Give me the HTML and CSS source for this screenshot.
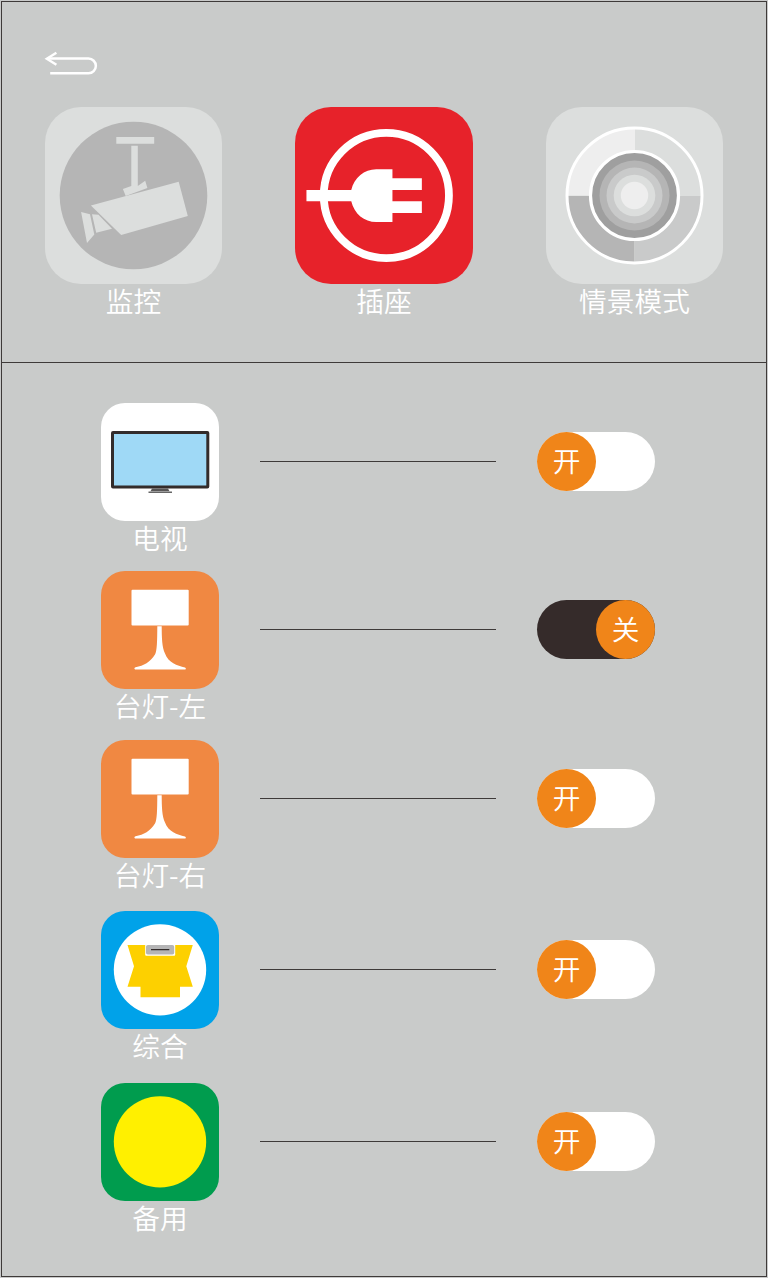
FILE: index.html
```html
<!DOCTYPE html>
<html lang="zh-CN">
<head>
<meta charset="utf-8">
<title>插座</title>
<link rel="stylesheet" href="styles.css">
</head>
<body>
<svg class="defs" width="0" height="0">
  <symbol id="lamp" viewBox="0 0 118 118">
    <rect x="30.5" y="18.8" width="57.2" height="35.6" rx="1"/>
    <path d="M56.3 55.2H60.7C60.8 67 61 76 64 82.500C67.500 92 76 94.500 84 96.400Q85.500 96.900 84.500 98.400H34Q32.500 97 34.500 96.300C43 94.800 49 91 54 83.500C56 80 56.200 70 56.300 55.200Z"/>
  </symbol>
</svg>
<main class="screen">
  <header class="top">
    <a class="back" href="#" aria-label="返回">
      <svg width="54" height="26" viewBox="0 0 54 26" fill="none" stroke="#fff">
        <path d="M4 8.600H44.500A7.300 7.300 0 0 1 44.500 23.300H6.200" stroke-width="2.500"/>
        <path d="M12.400 2.800L2.800 8.700L12.400 14.800" stroke-width="2.400"/>
      </svg>
    </a>
    <nav class="tabs">
      <div class="tab">
        <svg class="tile" viewBox="0 0 177 177">
          <circle cx="88.500" cy="88.500" r="73.800" fill="#b5b5b5"/>
          <g fill="#dcdedd">
            <path d="M71.300 30H109.200V36.700H71.300ZM86.300 38.700H92.800V79L100.200 73.800L102.400 81L80.700 89L77.900 81.900L86.300 79Z"/>
            <path d="M45.900 98.500L133.700 74.800L142.800 108.900L76.200 128Z"/>
            <path d="M36.100 105L45 107.200L49.300 127.500L42 136ZM47 107.200L53.500 107.800L67 121.700L51.200 125.800Z"/>
          </g>
        </svg>
        <span class="label">监控</span>
      </div>
      <div class="tab">
        <svg class="tile tile-active" viewBox="0 0 177.500 177" fill="#fff">
          <circle cx="91.100" cy="88.500" r="62.600" fill="none" stroke="#fff" stroke-width="7.800"/>
          <path d="M11.200 83H56C59 70.500 69 62.200 81 62.200H97.200V71.300H126.600V83H97.200V94.300H126.600V106H97.200V115.100H81C69 115.100 59 107 56 94.300H11.200Z"/>
        </svg>
        <span class="label">插座</span>
      </div>
      <div class="tab">
        <svg class="tile" viewBox="0 0 177 177">
          <path d="M89 88.500V20.500A68 68 0 0 0 21 88.500Z" fill="#eee"/>
          <path d="M88.200 89V157A68 68 0 0 1 20.500 89Z" fill="#b5b5b5"/>
          <path d="M88.200 89H156.500A68 68 0 0 1 88.200 157Z" fill="#c9caca"/>
          <circle cx="88.500" cy="88.500" r="67.500" fill="none" stroke="#fff" stroke-width="3"/>
          <circle cx="88.500" cy="88.500" r="44" fill="#9f9f9f" stroke="#fff" stroke-width="3.200"/>
          <circle cx="88.500" cy="88.500" r="35" fill="#b5b5b5"/>
          <circle cx="88.500" cy="88.500" r="28" fill="#c9caca"/>
          <circle cx="88.500" cy="88.500" r="20.800" fill="#dcdedd"/>
          <circle cx="88.500" cy="88.500" r="13.700" fill="#eee"/>
        </svg>
        <span class="label">情景模式</span>
      </div>
    </nav>
  </header>
  <section class="devices">
    <div class="device">
      <div class="item">
        <svg class="icon white" viewBox="0 0 118 118">
          <rect x="11.500" y="29.500" width="95.300" height="54.400" rx=".5" fill="#9fd9f6" stroke="#332c2b" stroke-width="3"/>
          <path d="M51 85.400H67L68.500 88.200H49.500Z" fill="#595757"/>
          <path d="M47.500 89.300H71" stroke="#666" stroke-width="1.500"/>
        </svg>
        <span class="label">电视</span>
      </div>
      <div class="wire"></div>
      <div class="toggle"><span class="knob">开</span></div>
    </div>
    <div class="device lamp-left">
      <div class="item">
        <svg class="icon orange" fill="#fff"><use href="#lamp"/></svg>
        <span class="label">台灯-左</span>
      </div>
      <div class="wire"></div>
      <div class="toggle off"><span class="knob">关</span></div>
    </div>
    <div class="device lamp-right">
      <div class="item">
        <svg class="icon orange" fill="#fff"><use href="#lamp"/></svg>
        <span class="label">台灯-右</span>
      </div>
      <div class="wire"></div>
      <div class="toggle"><span class="knob">开</span></div>
    </div>
    <div class="device mixed">
      <div class="item">
        <svg class="icon blue" viewBox="0 0 118 118">
          <ellipse cx="59" cy="58.800" rx="46.200" ry="45.600" fill="#fff"/>
          <path d="M26.500 34H91.800L85.300 55.200L91.800 75.800H79V86.300H39.500V75.800H26.500L33 55.200Z" fill="#fdd000"/>
          <rect x="44.200" y="32.500" width="30" height="12.300" rx="1" fill="#fff"/>
          <rect x="45" y="34" width="28.200" height="9.500" rx="1.800" fill="#b5b5b6"/>
          <path d="M50 38.600H68.300" stroke="#332c2b" stroke-width="1.200"/>
        </svg>
        <span class="label">综合</span>
      </div>
      <div class="wire"></div>
      <div class="toggle"><span class="knob">开</span></div>
    </div>
    <div class="device spare">
      <div class="item">
        <svg class="icon green" viewBox="0 0 118 118"><ellipse cx="59" cy="58.800" rx="46.200" ry="45.600" fill="#fff000"/></svg>
        <span class="label">备用</span>
      </div>
      <div class="wire"></div>
      <div class="toggle"><span class="knob">开</span></div>
    </div>
  </section>
</main>
</body>
</html>
```
FILE: styles.css
```css
* { box-sizing: border-box; }
body {
  margin: 0;
  padding: 1px;
  background: #c9caca;
  font-family: "Noto Sans CJK SC", sans-serif;
  font-weight: 350;
  color: #fff;
}
.defs { display: block; }
.screen {
  width: 766px;
  height: 1276px;
  border: 1px solid #3e3a39;
  background: #c9cbca;
}
.top {
  height: 361px;
  padding: 48px 43px 0 43px;
  border-bottom: 1px solid #3e3a39;
}
.back { display: block; width: 54px; height: 26px; margin-left: -1px; }
.back svg { display: block; }
.tabs {
  display: flex;
  justify-content: space-between;
  margin-top: 31px;
}
.tab {
  display: flex;
  flex-direction: column;
  align-items: center;
  width: 177px;
}
.tile {
  display: block;
  width: 177px;
  height: 177px;
  border-radius: 36px;
  background: #dcdedd;
}
.tile-active {
  width: 178px;
  margin-left: -1px;
  background: #e7222a;
}
.label {
  font-size: 27.7px;
  line-height: 32px;
  white-space: nowrap;
}
.devices { padding: 40px 0 0 99px; }
.device {
  display: flex;
  align-items: flex-start;
  height: 150px;
}
.lamp-left { margin-top: 18px; }
.lamp-right { margin-top: 19px; }
.mixed { margin-top: 21px; }
.spare { margin-top: 22px; }
.item {
  display: flex;
  flex-direction: column;
  align-items: center;
  width: 118px;
}
.icon {
  display: block;
  width: 118px;
  height: 118px;
  border-radius: 24px;
}
.white { background: #fff; }
.orange { background: #f08842; }
.blue { background: #00a2e9; }
.green { background: #009c4e; }
.wire {
  width: 236px;
  height: 1px;
  margin: 58px 41px 0;
  background: #3e3a39;
}
.toggle {
  display: flex;
  width: 118px;
  height: 59px;
  margin-top: 29px;
  border-radius: 30px;
  background: #fff;
}
.off { justify-content: flex-end; background: #352b2a; }
.knob {
  width: 59px;
  height: 59px;
  border-radius: 50%;
  background: #f08519;
  font-size: 27.7px;
  line-height: 57px;
  text-align: center;
}
```
